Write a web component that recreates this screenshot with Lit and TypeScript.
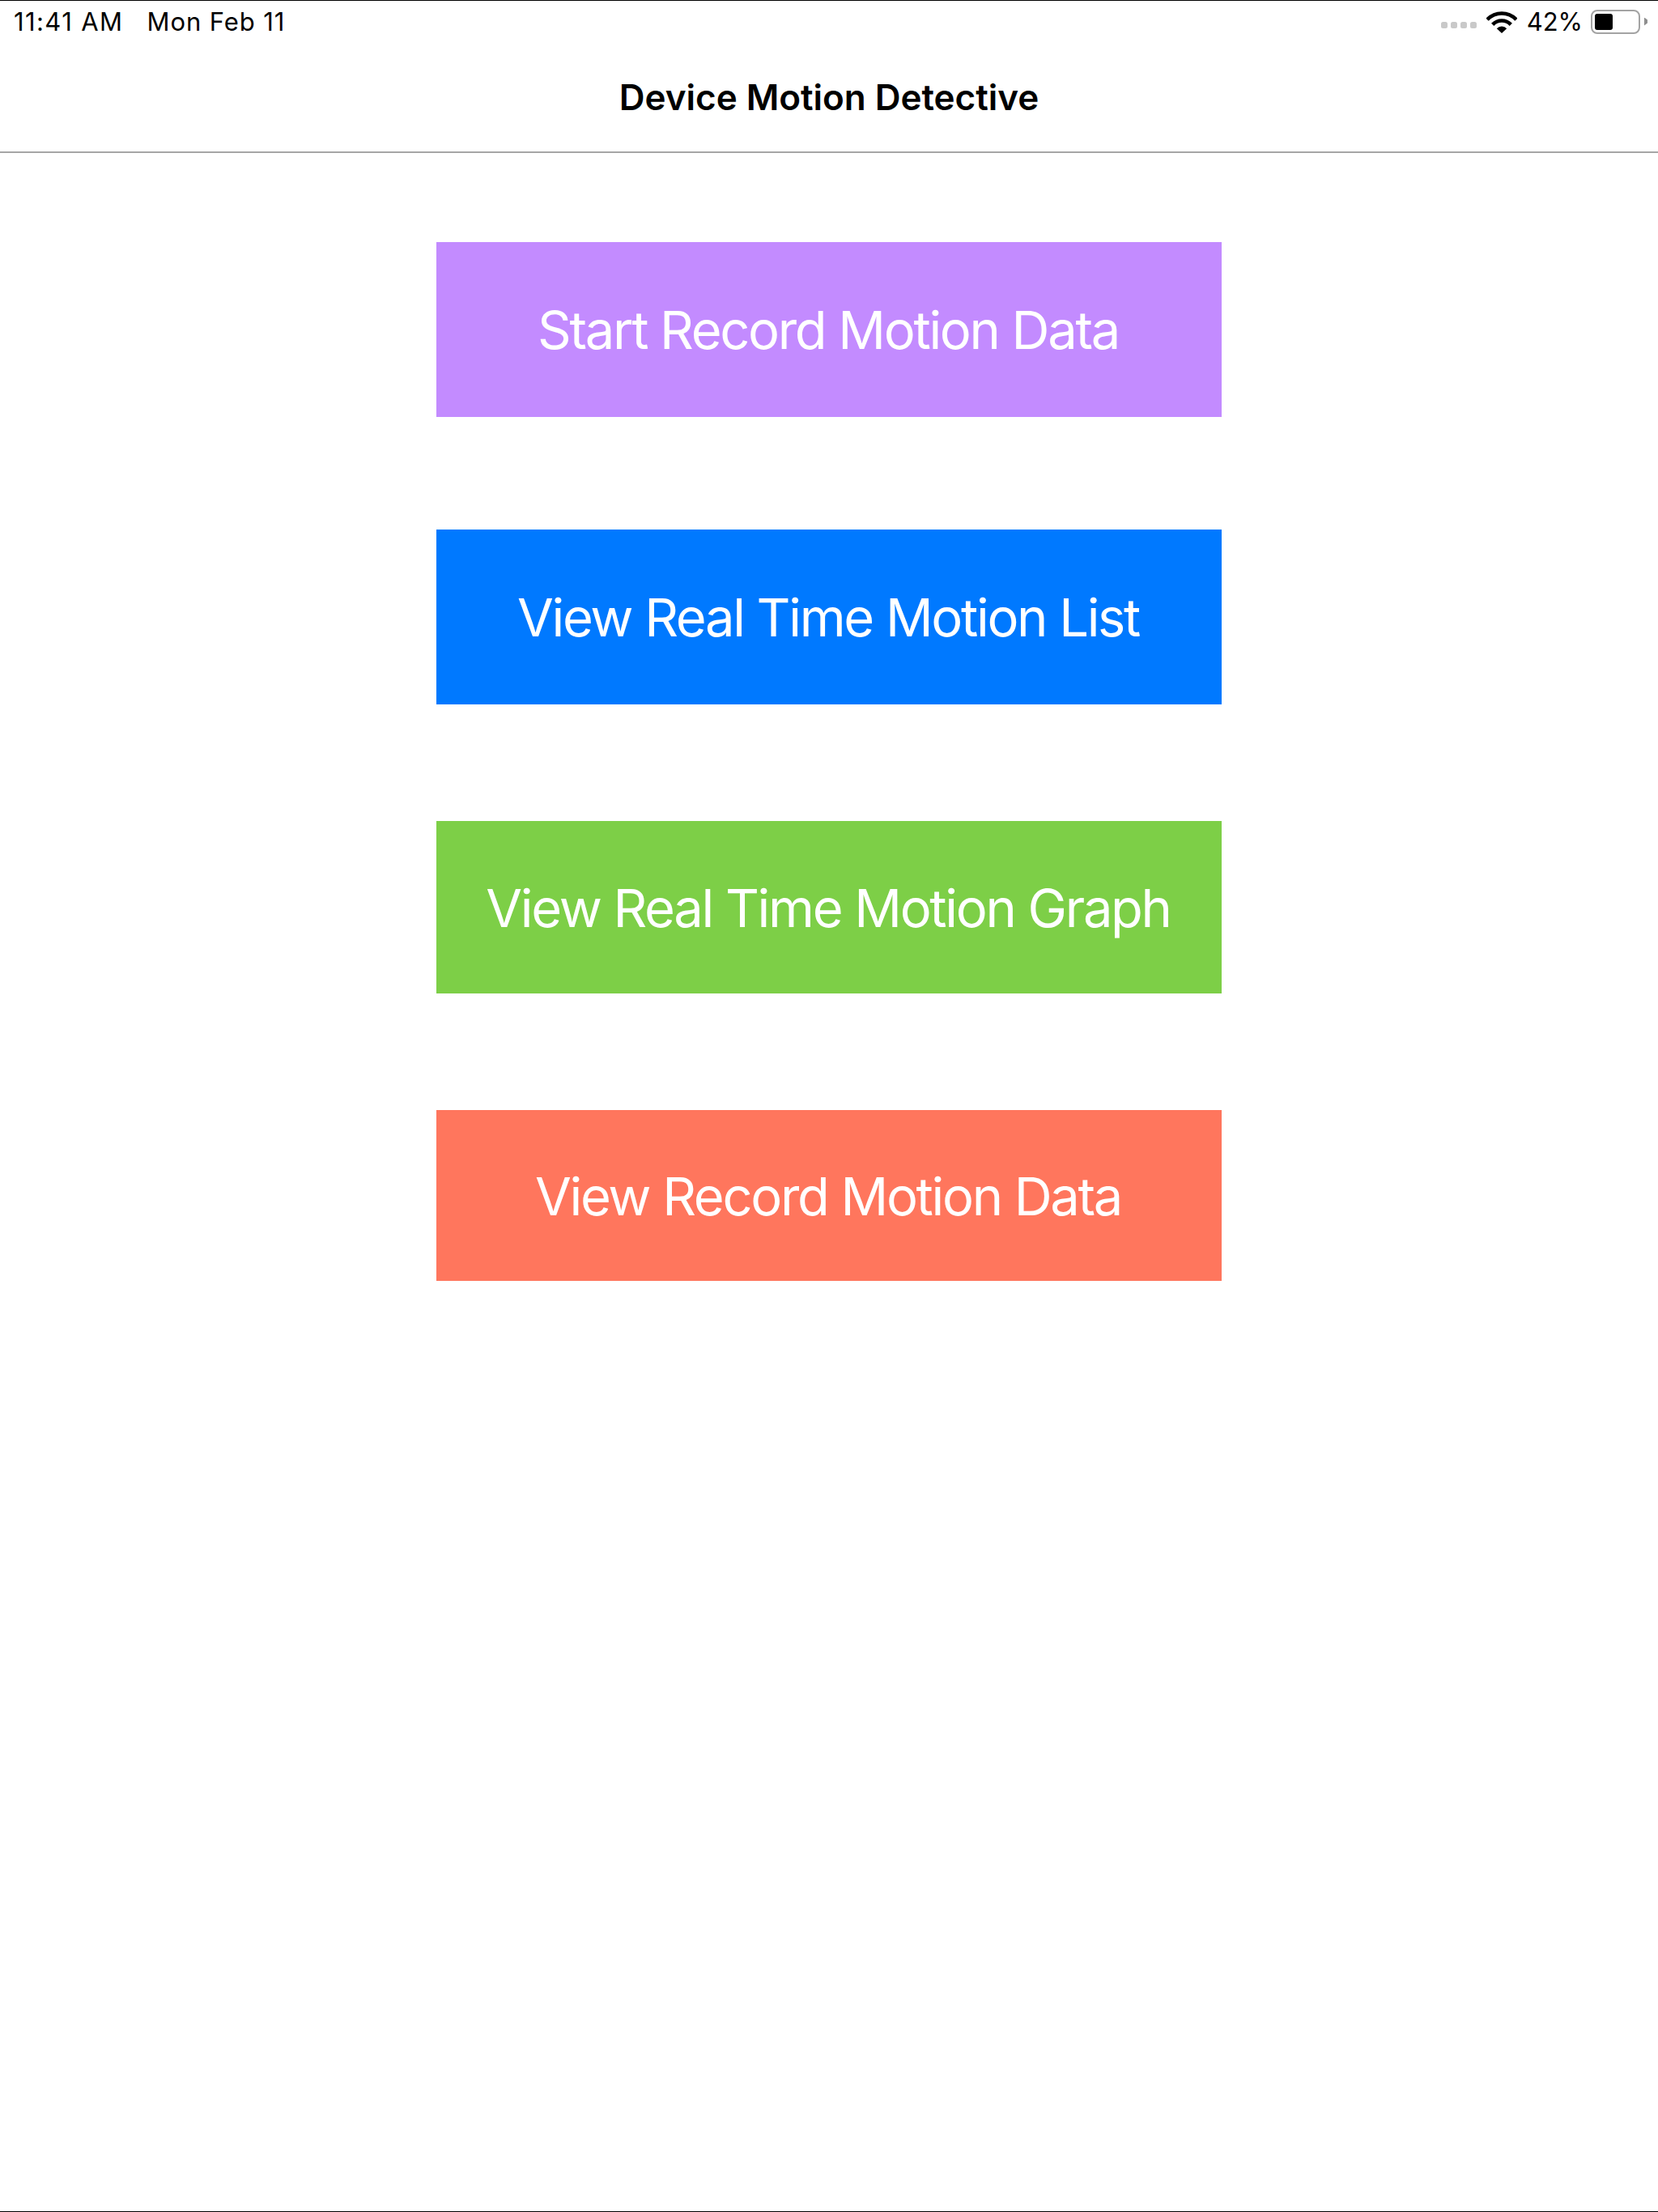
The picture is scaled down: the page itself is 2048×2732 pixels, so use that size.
import { LitElement, html, css } from "lit";
import { customElement } from "lit/decorators.js";

@customElement("app-root")
export class AppRoot extends LitElement {
  static styles = css`
    :host {
      display: block;
      width: 2048px;
      height: 2732px;
      background: #fff;
      font-family: Inter, "Liberation Sans", sans-serif;
      color: #000;
    }
    .page {
      box-sizing: border-box;
      width: 100%;
      height: 100%;
      display: flex;
      flex-direction: column;
      border-top: 1px solid #000;
      border-bottom: 1px solid #000;
    }
    .status {
      height: 52px;
      flex: none;
      display: flex;
      align-items: center;
      justify-content: space-between;
      box-sizing: border-box;
      padding: 0 13px 1px 17px;
      font-size: 31px;
      line-height: 52px;
    }
    .left {
      display: flex;
      gap: 29px;
    }
    .time { letter-spacing: 1.4px; }
    .date { letter-spacing: 0.9px; }
    .right {
      display: flex;
      align-items: center;
    }
    .dots {
      display: flex;
      gap: 4px;
      margin-right: 12px;
      margin-top: 9px;
    }
    .dots i {
      width: 8px;
      height: 8px;
      border-radius: 2.5px;
      background: #c9c9c9;
    }
    .wifi {
      width: 38px;
      height: 27px;
      display: block;
      margin-right: 12px;
      margin-top: 1px;
    }
    .pct {
      margin-right: 10px;
    }
    .battery {
      box-sizing: border-box;
      width: 61px;
      height: 30px;
      border: 2px solid #a3a3a3;
      border-radius: 8px;
      padding: 3px;
    }
    .battery b {
      display: block;
      width: 22px;
      height: 100%;
      background: #000;
      border-radius: 3px;
    }
    .nub {
      width: 4px;
      height: 10px;
      margin-left: 5px;
      background: #8e8e8e;
      clip-path: polygon(0 0, 100% 30%, 100% 70%, 0 100%);
    }
    .nav {
      height: 136px;
      flex: none;
      box-sizing: border-box;
      display: flex;
      align-items: center;
      justify-content: center;
      border-bottom: 2px solid #a6a6a6;
    }
    .nav h1 {
      margin: 0;
      font-size: 44px;
      font-weight: 600;
      line-height: 50px;
      letter-spacing: -0.02px;
    }
    .main {
      flex: 1;
      display: flex;
      flex-direction: column;
      align-items: center;
      padding-top: 110px;
    }
    .btn {
      box-sizing: border-box;
      width: 970px;
      display: flex;
      align-items: center;
      justify-content: center;
      color: #fff;
      font-size: 65px;
      line-height: 72px;
      letter-spacing: -2.3px;
      font-weight: 400;
      border: 0;
      padding: 2px 2px 0 0;
      font-family: inherit;
    }
    .b1 { height: 216px; background: #c38bff; }
    .b2 { height: 216px; background: #0079ff; margin-top: 139px; }
    .b3 { height: 213px; background: #7dcf47; margin-top: 144px; }
    .b4 { height: 211px; background: #ff765d; margin-top: 144px; }
  `;

  render() {
    return html`
      <div class="page">
        <div class="status">
          <div class="left"><span class="time">11:41 AM</span><span class="date">Mon Feb 11</span></div>
          <div class="right">
            <div class="dots"><i></i><i></i><i></i><i></i></div>
            <svg class="wifi" viewBox="0 0 38 27" aria-hidden="true">
              <path d="M1.1 10.3A24.5 24.5 0 0 1 36.9 10.3" fill="none" stroke="#000" stroke-width="4.6" />
              <path d="M7.7 16.4A15.5 15.5 0 0 1 30.3 16.4" fill="none" stroke="#000" stroke-width="4.6" />
              <path d="M19 27L12.8 21.2A8.5 8.5 0 0 1 25.2 21.2Z" fill="#000" />
            </svg>
            <span class="pct">42%</span>
            <div class="battery"><b></b></div>
            <div class="nub"></div>
          </div>
        </div>
        <div class="nav"><h1>Device Motion Detective</h1></div>
        <div class="main">
          <button class="btn b1">Start Record Motion Data</button>
          <button class="btn b2">View Real Time Motion List</button>
          <button class="btn b3">View Real Time Motion Graph</button>
          <button class="btn b4">View Record Motion Data</button>
        </div>
      </div>
    `;
  }
}
